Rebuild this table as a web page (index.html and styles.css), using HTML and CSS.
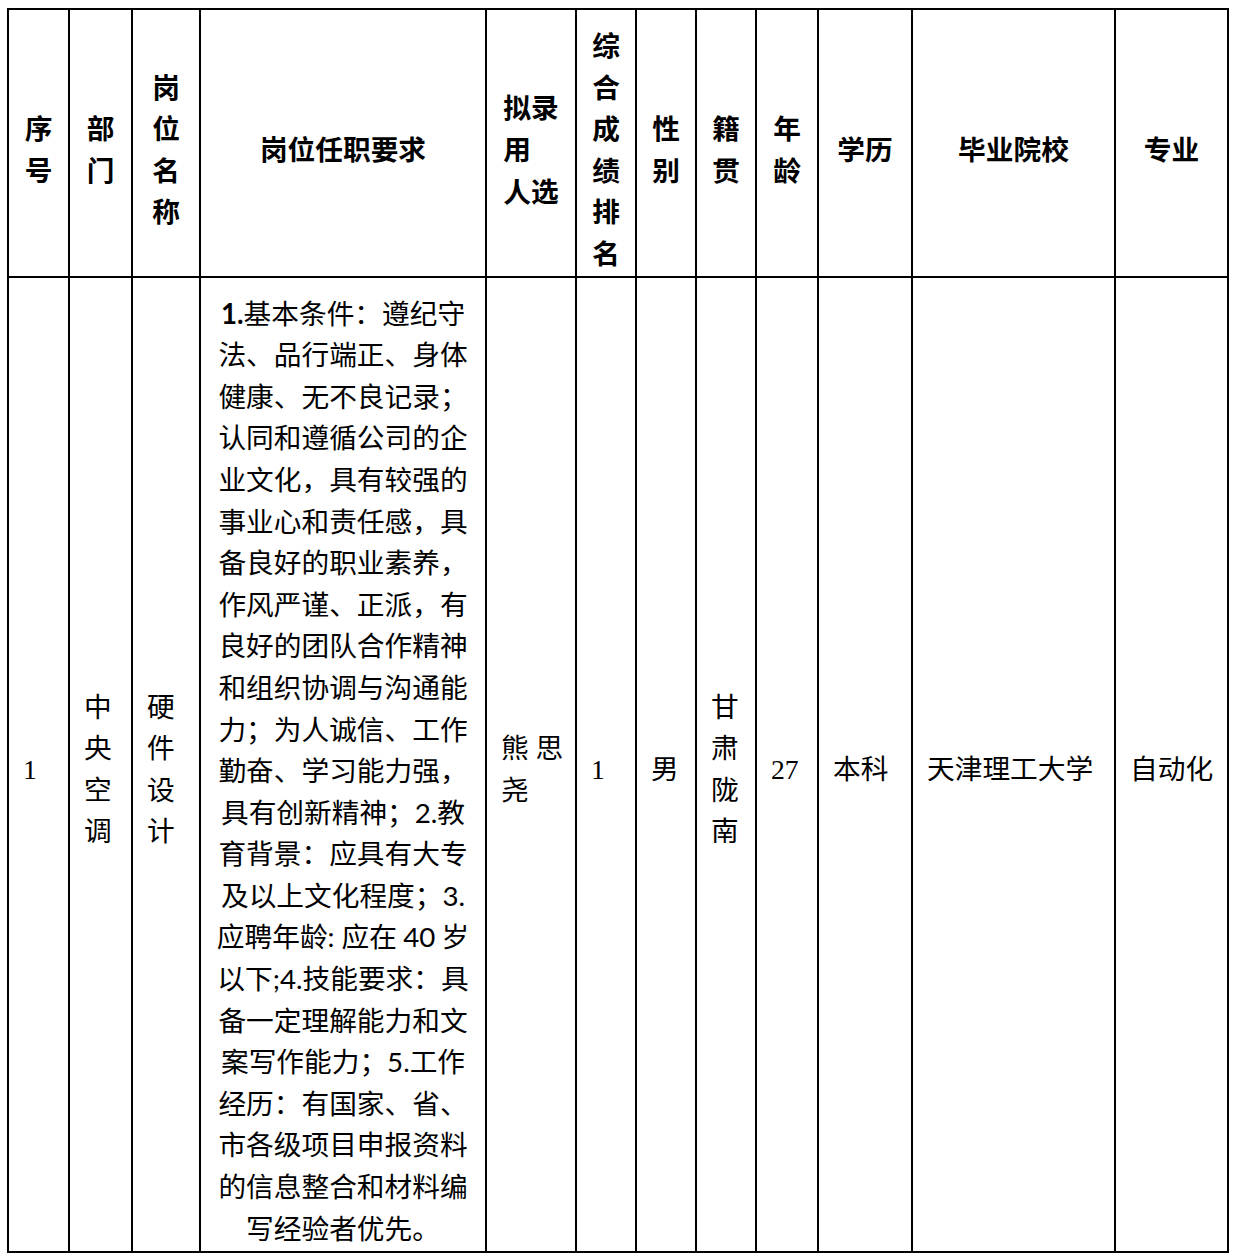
FILE: index.html
```html
<!DOCTYPE html>
<html lang="zh-CN">
<head>
<meta charset="utf-8">
<title>拟录用人选</title>
<link rel="stylesheet" href="styles.css">
</head>
<body>
<table class="grid">
  <colgroup>
    <col class="c1"><col class="c2"><col class="c3"><col class="c4"><col class="c5"><col class="c6">
    <col class="c7"><col class="c8"><col class="c9"><col class="c10"><col class="c11"><col class="c12">
  </colgroup>
  <tr class="head">
    <th>序<br>号</th>
    <th>部<br>门</th>
    <th>岗<br>位<br>名<br>称</th>
    <th>岗位任职要求</th>
    <th><span class="lb">拟录<br>用<br>人选</span></th>
    <th>综<br>合<br>成<br>绩<br>排<br>名</th>
    <th>性<br>别</th>
    <th>籍<br>贯</th>
    <th>年<br>龄</th>
    <th>学历</th>
    <th>毕业院校</th>
    <th>专业</th>
  </tr>
  <tr class="body">
    <td class="num">1</td>
    <td>中<br>央<br>空<br>调</td>
    <td>硬<br>件<br>设<br>计</td>
    <td class="req"><span class="lat b">1.</span>基本条件：遵纪守<br>法、品行端正、身体<br>健康、无不良记录；<br>认同和遵循公司的企<br>业文化，具有较强的<br>事业心和责任感，具<br>备良好的职业素养，<br>作风严谨、正派，有<br>良好的团队合作精神<br>和组织协调与沟通能<br>力；为人诚信、工作<br>勤奋、学习能力强，<br>具有创新精神；<span class="lat">2.</span>教<br>育背景：应具有大专<br>及以上文化程度；<span class="lat">3.</span><br>应聘年龄<span class="lat">: </span>应在 <span class="lat">40</span> 岁<br>以下<span class="lat">;4.</span>技能要求：具<br>备一定理解能力和文<br>案写作能力；<span class="lat">5.</span>工作<br>经历：有国家、省、<br>市各级项目申报资料<br>的信息整合和材料编<br>写经验者优先。</td>
    <td>熊 思<br>尧</td>
    <td class="num">1</td>
    <td>男</td>
    <td>甘<br>肃<br>陇<br>南</td>
    <td class="num">27</td>
    <td>本科</td>
    <td>天津理工大学</td>
    <td>自动化</td>
  </tr>
</table>
</body>
</html>
```

FILE: styles.css
```css
html, body {
  margin: 0;
  padding: 0;
  background: #ffffff;
}

body {
  padding: 8px 0 0 7px;
  color: #000000;
  font-family: "Liberation Serif", "Noto Sans CJK SC", serif;
  font-size: 27.7px;
  line-height: 41.6px;
}

.grid {
  border-collapse: collapse;
  table-layout: fixed;
  width: 1222px;
}

.c1 { width: 61px; }
.c2 { width: 63px; }
.c3 { width: 68px; }
.c4 { width: 286px; }
.c5 { width: 90px; }
.c6 { width: 60px; }
.c7 { width: 60px; }
.c8 { width: 60px; }
.c9 { width: 62px; }
.c10 { width: 94px; }
.c11 { width: 203px; }
.c12 { width: 113px; }

.grid th,
.grid td {
  border: 2px solid #000000;
  vertical-align: middle;
  overflow: hidden;
}

.head {
  height: 266px;
}

.grid th {
  font-family: "Noto Sans CJK SC", sans-serif;
  font-weight: 700;
  text-align: center;
  padding: 14px 0 2px 0;
}

.lb {
  display: inline-block;
  text-align: left;
}

.grid td {
  font-family: "Liberation Serif", "Noto Sans CJK SC", serif;
  font-weight: 400;
  text-align: left;
  padding: 14px 0 3px 14px;
  white-space: nowrap;
}

.grid td.req {
  font-family: "Noto Sans CJK SC", sans-serif;
  text-align: center;
  padding: 14px 0 3px 0;
}

.lat {
  font-family: "Lato", "Noto Sans CJK SC", sans-serif;
  line-height: 0;
}

.b {
  font-weight: 700;
}
```
